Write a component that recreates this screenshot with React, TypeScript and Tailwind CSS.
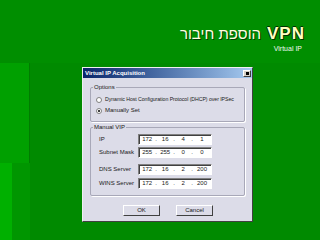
import { ReactNode } from 'react';

function IpField({ parts }: { parts: string[] }) {
  return (
    <div className="flex h-[11px] w-[74px] items-center border border-t-[#808080] border-l-[#808080] border-r-white border-b-white bg-white shadow-[inset_1px_1px_0_#404040]">
      {parts.map((p, i) => (
        <div key={i} className="flex flex-1 items-center">
          <span className="flex-1 text-center">{p}</span>
          {i < 3 && <span>.</span>}
        </div>
      ))}
    </div>
  );
}

function Row({ label, parts, className = '' }: { label: string; parts: string[]; className?: string }) {
  return (
    <div className={`flex items-center ${className}`}>
      <span className="w-[40px] pl-[1px]">{label}</span>
      <IpField parts={parts} />
    </div>
  );
}

function Group({ title, children, className = '' }: { title: string; children: ReactNode; className?: string }) {
  return (
    <div className={`relative rounded-[2px] border border-[#a8a8b8] shadow-[1px_1px_0_#fff] ${className}`}>
      <span className="absolute -top-[5px] left-[2px] bg-[#dcdce8] px-[1px] leading-[8px] text-[#202020]">{title}</span>
      {children}
    </div>
  );
}

function Radio({ checked, label, small }: { checked?: boolean; label: string; small?: boolean }) {
  return (
    <div className="flex items-center gap-[3px] whitespace-nowrap">
      <span className="flex h-[6px] w-[6px] shrink-0 items-center justify-center rounded-full border border-[#808080] bg-white">
        {checked && <span className="h-[2px] w-[2px] rounded-full bg-black" />}
      </span>
      <span className={small ? 'text-[5.2px] tracking-[-0.05px]' : ''}>{label}</span>
    </div>
  );
}

export default function App() {
  return (
    <div className="flex h-[240px] w-[320px] flex-col overflow-hidden bg-[#008c00] font-['Liberation_Sans',Arial,sans-serif]">
      {/* Title band */}
      <div className="flex h-[63px] flex-col items-end bg-[#008e00] pr-[15px] pt-[26px]">
        <div className="flex items-baseline gap-[6px]">
          <span dir="rtl" className="text-[15px] leading-[16px] text-[#ffffe0] [text-shadow:1px_1px_0_#004000]">הוספת חיבור</span>
          <span className="text-[17px] font-black leading-[16px] tracking-[1px] text-[#ffffc0] [text-shadow:1px_1px_0_#003000,-1px_0_0_#003000,0_-1px_0_#003000]">VPN</span>
        </div>
        <span className="mt-[3px] pr-[3px] text-[7px] leading-[8px] text-[#f0f8f0]">Virtual IP</span>
      </div>

      <div className="flex flex-1">
        {/* left decorative strip */}
        <div className="flex w-[30px] flex-col">
          <div className="h-[100px] border-r border-[#007c00] bg-[#00a000]" />
          <div className="flex flex-1">
            <div className="w-[12px] bg-[#00b000]" />
            <div className="flex-1 bg-[#009600]" />
          </div>
        </div>

        {/* dialog area */}
        <div className="flex-1 bg-[#008a00] pl-[52px] pt-[4px]">
          <div className="flex h-[155px] w-[171px] flex-col border border-t-[#f0f0f0] border-l-[#f0f0f0] border-r-[#404040] border-b-[#404040] bg-[#dcdce8] text-[6px] leading-[7px] text-[#202020]">
            <div className="flex h-[10px] items-center justify-between bg-gradient-to-r from-[#0a246a] to-[#a6caf0] pl-[2px] pr-[1px]">
              <span className="text-[6px] font-bold text-white">Virtual IP Acquisition</span>
              <span className="flex h-[7px] w-[8px] items-center justify-center border border-t-white border-l-white border-r-[#404040] border-b-[#404040] bg-[#d4d0c8]">
                <span className="h-[3px] w-[3px] bg-black" />
              </span>
            </div>

            <div className="flex flex-col px-[7px] pt-[9px]">
              <Group title="Options" className="h-[35px] pl-[5px] pt-[8px]">
                <div className="flex flex-col gap-[4px]">
                  <Radio small label="Dynamic Host Configuration Protocol (DHCP) over IPSec" />
                  <Radio checked label="Manually Set" />
                </div>
              </Group>

              <Group title="Manual VIP" className="mt-[5px] h-[69px] pl-[7px] pt-[6px]">
                <Row label="IP" parts={['172', '16', '4', '1']} />
                <Row label="Subnet Mask" parts={['255', '255', '0', '0']} className="mt-[2px]" />
                <Row label="DNS Server" parts={['172', '16', '2', '200']} className="mt-[6px]" />
                <Row label="WINS Server" parts={['172', '16', '2', '200']} className="mt-[3px]" />
              </Group>

              <div className="mt-[9px] flex gap-[16px] pl-[33px]">
                <button className="h-[11px] w-[37px] border border-t-white border-l-white border-r-[#404040] border-b-[#404040] bg-[#dcdce8] text-[6px] leading-[7px]">OK</button>
                <button className="h-[11px] w-[37px] border border-t-white border-l-white border-r-[#404040] border-b-[#404040] bg-[#dcdce8] text-[6px] leading-[7px]">Cancel</button>
              </div>
            </div>
          </div>
        </div>
      </div>
    </div>
  );
}
